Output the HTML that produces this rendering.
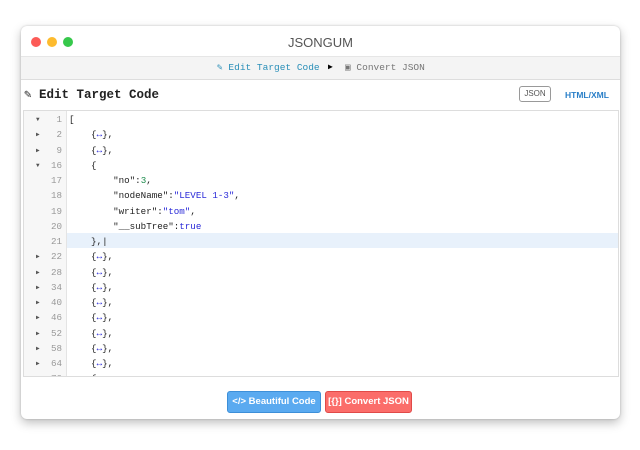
<!DOCTYPE html>
<html><head><style>
body{margin:0;width:640px;height:450px;background:#fff;font-family:"Liberation Sans",sans-serif;overflow:hidden;position:relative}
.win{position:absolute;left:21px;top:26px;width:599px;height:393px;background:#fff;border-radius:6px;box-shadow:0 4px 10px rgba(0,0,0,.25),0 0 2px rgba(0,0,0,.2);overflow:hidden}
.tb{height:30px;position:relative;text-align:center;font-size:13px;color:#555;line-height:34px}
.dot{position:absolute;top:11px;width:10px;height:10px;border-radius:50%}
.nav{position:absolute;top:30px;left:0;right:0;height:22px;background:#f4f4f4;border-top:1px solid #e6e6e6;border-bottom:1px solid #ddd;font-family:"Liberation Mono",monospace;font-size:9.5px;line-height:22px}
.hd{position:absolute;top:60px;left:3px;font-family:"Liberation Mono",monospace;font-weight:bold;font-size:12.5px;color:#222}
.ed{position:absolute;left:2px;top:84px;width:594px;height:265px;border:1px solid #ddd;overflow:hidden;font-family:"Liberation Mono",monospace;font-size:9.2px}
.gut{position:absolute;left:0;top:0;width:42px;height:100%;background:#f7f7f7;border-right:1px solid #e4e4e4}
.row{position:absolute;left:0;right:0;height:15.25px;line-height:15.25px;white-space:pre}
.n{position:absolute;left:0;width:38px;text-align:right;color:#999}
.f{position:absolute;left:12px;font-size:6px;color:#555}
.c{position:absolute;left:45px;color:#222}
.s{color:#2a2ad8}.num{color:#1a8a4a}.k{color:#2a2ad8}
.b{position:absolute;top:365px;height:20px;line-height:20px;border-radius:3px;color:#fff;font-size:9.5px;font-weight:bold;text-align:center;white-space:nowrap}
</style></head><body>
<div class="win">
<div class="tb"><span class="dot" style="left:10px;background:#fc5b57"></span><span class="dot" style="left:26px;background:#fdbb2e"></span><span class="dot" style="left:42px;background:#36c84b"></span>JSONGUM</div>
<div class="nav"><span style="position:absolute;left:196px;color:#2a8fb8">✎ Edit Target Code</span><span style="position:absolute;left:307px;font-size:8px">▶</span><span style="position:absolute;left:324px;color:#777">▣ Convert JSON</span></div>
<div class="hd">✎ Edit Target Code</div>
<div style="position:absolute;left:498px;top:60px;width:30px;height:14px;border:1px solid #999;border-radius:3px;font-size:8px;line-height:14px;text-align:center;color:#555">JSON</div>
<div style="position:absolute;left:544px;top:64px;font-size:8.5px;font-weight:bold;color:#2a7fc8">HTML/XML</div>
<div class="ed">
<div class="gut"></div>
<div class="row" style="top:122px;left:43px;background:#e8f1fb"></div>
<div id="rows"></div>
</div>
<div class="b" style="left:206px;width:92px;background:#5aaaf0;border:1px solid #3d8fd8">&lt;/&gt; Beautiful Code</div>
<div class="b" style="left:304px;width:85px;background:#fb6d6a;border:1px solid #e04a48">[{}] Convert JSON</div>
</div>
<script>
var L=[["▼","1","["],["▶","2","    {<span class=s>↔</span>},"],["▶","9","    {<span class=s>↔</span>},"],["▼","16","    {"],["","17","        \"no\":<span class=num>3</span>,"],["","18","        \"nodeName\":<span class=s>\"LEVEL 1-3\"</span>,"],["","19","        \"writer\":<span class=s>\"tom\"</span>,"],["","20","        \"__subTree\":<span class=k>true</span>"],["","21","    },|"]];
[22,28,34,40,46,52,58,64].forEach(function(n){L.push(["▶",""+n,"    {<span class=s>↔</span>},"])});
L.push(["","70","    {"]);
var h="";L.forEach(function(r,i){h+='<div class="row" style="top:'+(1+i*15.25)+'px"><span class="f">'+r[0]+'</span><span class="n">'+r[1]+'</span><span class="c">'+r[2]+'</span></div>'});
document.getElementById("rows").innerHTML=h;
</script>
</body></html>
